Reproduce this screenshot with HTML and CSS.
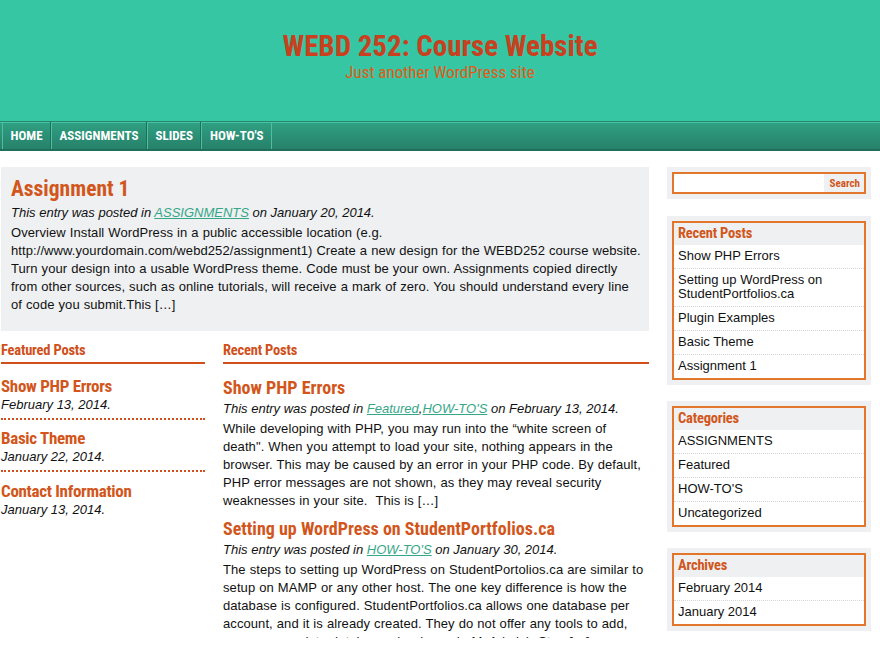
FILE: index.html
```html
<!DOCTYPE html>
<html lang="en">
<head>
<meta charset="utf-8">
<title>WEBD 252: Course Website</title>
<link rel="stylesheet" href="styles.css">
</head>
<body>
<header class="site-header">
  <h1 class="site-title">WEBD 252: Course Website</h1>
  <p class="site-desc">Just another WordPress site</p>
</header>
<nav class="main-nav">
  <ul class="nav-list">
    <li class="nav-item">HOME</li>
    <li class="nav-item">ASSIGNMENTS</li>
    <li class="nav-item">SLIDES</li>
    <li class="nav-item">HOW-TO'S</li>
  </ul>
</nav>
<div class="page">
  <main class="content">
    <article class="post-box">
      <h2 class="post-title">Assignment 1</h2>
      <p class="meta">This entry was posted in <a class="cat-link" href="#">ASSIGNMENTS</a> on January 20, 2014.</p>
      <p class="excerpt">Overview Install WordPress in a public accessible location (e.g. http://www.yourdomain.com/webd252/assignment1) Create a new design for the WEBD252 course website. Turn your design into a usable WordPress theme. Code must be your own. Assignments copied directly from other sources, such as online tutorials, will receive a mark of zero. You should understand every line of code you submit.This […]</p>
    </article>
    <div class="columns">
      <section class="featured">
        <h3 class="col-heading">Featured Posts</h3>
        <div class="feat-item">
          <h4 class="feat-title">Show PHP Errors</h4>
          <p class="feat-date">February 13, 2014.</p>
        </div>
        <div class="feat-item">
          <h4 class="feat-title">Basic Theme</h4>
          <p class="feat-date">January 22, 2014.</p>
        </div>
        <div class="feat-item last">
          <h4 class="feat-title">Contact Information</h4>
          <p class="feat-date">January 13, 2014.</p>
        </div>
      </section>
      <section class="recent">
        <h3 class="col-heading">Recent Posts</h3>
        <div class="recent-item">
          <h4 class="recent-title">Show PHP Errors</h4>
          <p class="meta">This entry was posted in <a class="cat-link" href="#">Featured</a>,<a class="cat-link" href="#">HOW-TO'S</a> on February 13, 2014.</p>
          <p class="excerpt">While developing with PHP, you may run into the “white screen of death". When you attempt to load your site, nothing appears in the browser. This may be caused by an error in your PHP code. By default, PHP error messages are not shown, as they may reveal security weaknesses in your site. &nbsp;This is […]</p>
        </div>
        <div class="recent-item">
          <h4 class="recent-title">Setting up WordPress on StudentPortfolios.ca</h4>
          <p class="meta">This entry was posted in <a class="cat-link" href="#">HOW-TO'S</a> on January 30, 2014.</p>
          <p class="excerpt">The steps to setting up WordPress on StudentPortolios.ca are similar to setup on MAMP or any other host. The one key difference is how the database is configured. StudentPortfolios.ca allows one database per account, and it is already created. They do not offer any tools to add, remove or update databases (such as phpMyAdmin). Step […]</p>
        </div>
      </section>
    </div>
  </main>
  <aside class="sidebar">
    <div class="widget search-widget">
      <form class="search-form">
        <input class="search-input" type="text" aria-label="Search">
        <button class="search-btn" type="button">Search</button>
      </form>
    </div>
    <div class="widget">
      <div class="widget-inner">
        <h3 class="widget-title">Recent Posts</h3>
        <ul class="widget-list">
          <li>Show PHP Errors</li>
          <li>Setting up WordPress on StudentPortfolios.ca</li>
          <li>Plugin Examples</li>
          <li>Basic Theme</li>
          <li>Assignment 1</li>
        </ul>
      </div>
    </div>
    <div class="widget">
      <div class="widget-inner">
        <h3 class="widget-title">Categories</h3>
        <ul class="widget-list">
          <li>ASSIGNMENTS</li>
          <li>Featured</li>
          <li>HOW-TO'S</li>
          <li>Uncategorized</li>
        </ul>
      </div>
    </div>
    <div class="widget">
      <div class="widget-inner">
        <h3 class="widget-title">Archives</h3>
        <ul class="widget-list">
          <li>February 2014</li>
          <li>January 2014</li>
        </ul>
      </div>
    </div>
  </aside>
</div>
</body>
</html>
```
FILE: styles.css
```css
html, body {
  margin: 0;
  padding: 0;
  background: #ffffff;
}
body {
  font-family: "Liberation Sans", Arial, sans-serif;
  font-size: 13px;
  color: #111;
}
h1, h2, h3, h4, p, ul {
  margin: 0;
  padding: 0;
}
ul { list-style: none; }

.site-title, .site-desc, .nav-item, .post-title, .col-heading, .feat-title,
.recent-title, .widget-title, .search-btn {
  font-family: "Roboto Condensed", "Open Sans", sans-serif;
  font-stretch: condensed;
  font-weight: bold;
}

/* header */
.site-header {
  background: #37c6a3;
  height: 121px;
  box-sizing: border-box;
  padding-top: 28px;
  text-align: center;
}
.site-title {
  font-size: 29px;
  line-height: 36px;
  color: #c8401e;
}
.site-desc {
  font-size: 17px;
  font-weight: normal;
  line-height: 16px;
  color: #e25a16;
}

/* navigation */
.main-nav {
  height: 30px;
  box-sizing: border-box;
  border-top: 1px solid #24876c;
  border-bottom: 2px solid #1f6f5a;
  background: linear-gradient(#2fa083, #27816a);
  box-shadow: inset 0 1px 0 #48c3a4;
}
.nav-list {
  display: flex;
  height: 100%;
  padding-left: 2px;
}
.nav-item {
  color: #fff;
  font-size: 13px;
  line-height: 27px;
  padding: 0 7.5px;
  border-left: 1px solid #4cc0a1;
  border-right: 1px solid #1f6f5a;
}
.nav-item:last-child { border-right: 1px solid #4cc0a1; }

/* page layout */
.page {
  display: flex;
  align-items: flex-start;
  gap: 18px;
  margin-top: 16px;
  height: 471px;
  overflow: hidden;
}
.content {
  width: 648px;
  flex: none;
  padding-left: 1px;
}

/* featured post box */
.post-box {
  background: #eef0f1;
  padding: 7px 7px 0 10px;
  height: 164px;
  box-sizing: border-box;
}
.post-title {
  font-size: 21.5px;
  line-height: 30px;
  color: #d2561b;
}
.meta {
  font-style: italic;
  font-size: 13px;
  line-height: 18px;
  margin-bottom: 2px;
}
.cat-link {
  color: #35a788;
  text-decoration: underline;
}
.excerpt {
  font-size: 13px;
  line-height: 18px;
  letter-spacing: 0.08px;
  word-spacing: 0.3px;
}

/* two columns */
.columns {
  display: flex;
  gap: 18px;
  margin-top: 10px;
}
.featured {
  width: 204px;
  flex: none;
}
.recent {
  flex: 1;
}
.col-heading {
  font-size: 14.5px;
  line-height: 20px;
  letter-spacing: -0.2px;
  color: #d04f1a;
  border-bottom: 2px solid #d04f1a;
  padding-bottom: 1px;
}
.feat-item {
  padding: 11px 0 5px;
  border-bottom: 2px dotted #d04f1a;
}
.feat-item + .feat-item { padding-top: 7px; }
.feat-item.last { border-bottom: none; padding-top: 8px; }
.feat-title {
  font-size: 17px;
  line-height: 22px;
  letter-spacing: -0.3px;
  color: #d2561b;
}
.feat-date {
  font-style: italic;
  font-size: 13px;
  line-height: 16px;
}
.recent-item { padding-top: 11px; }
.recent-item + .recent-item { padding-top: 6px; }
.recent-title {
  font-size: 18px;
  line-height: 25px;
  color: #d2561b;
}

/* sidebar */
.sidebar {
  width: 204px;
  flex: none;
  display: flex;
  flex-direction: column;
  gap: 16px;
}
.widget {
  background: #eef0f1;
  padding: 5px;
}
.search-widget { margin-bottom: 1px; }
.search-form {
  display: flex;
  border: 2px solid #e2762a;
  background: #fff;
  height: 22px;
  box-sizing: border-box;
}
.search-input {
  flex: 1;
  min-width: 0;
  border: none;
  outline: none;
  padding: 0;
  background: #fff;
}
.search-btn {
  border: none;
  background: #eef0f1;
  color: #d2561b;
  font-size: 11px;
  padding: 0 4px 0 6px;
}
.widget-inner {
  border: 2px solid #e2762a;
  background: #fff;
}
.widget-title {
  background: #eef0f1;
  font-size: 14.5px;
  line-height: 22px;
  letter-spacing: -0.2px;
  color: #d2561b;
  padding: 0 4px;
}
.widget-list li {
  padding: 4px 4px 5px;
  line-height: 14px;
  border-bottom: 1px dotted #d3d5d6;
}
.widget-list li:last-child { border-bottom: none; }
```
